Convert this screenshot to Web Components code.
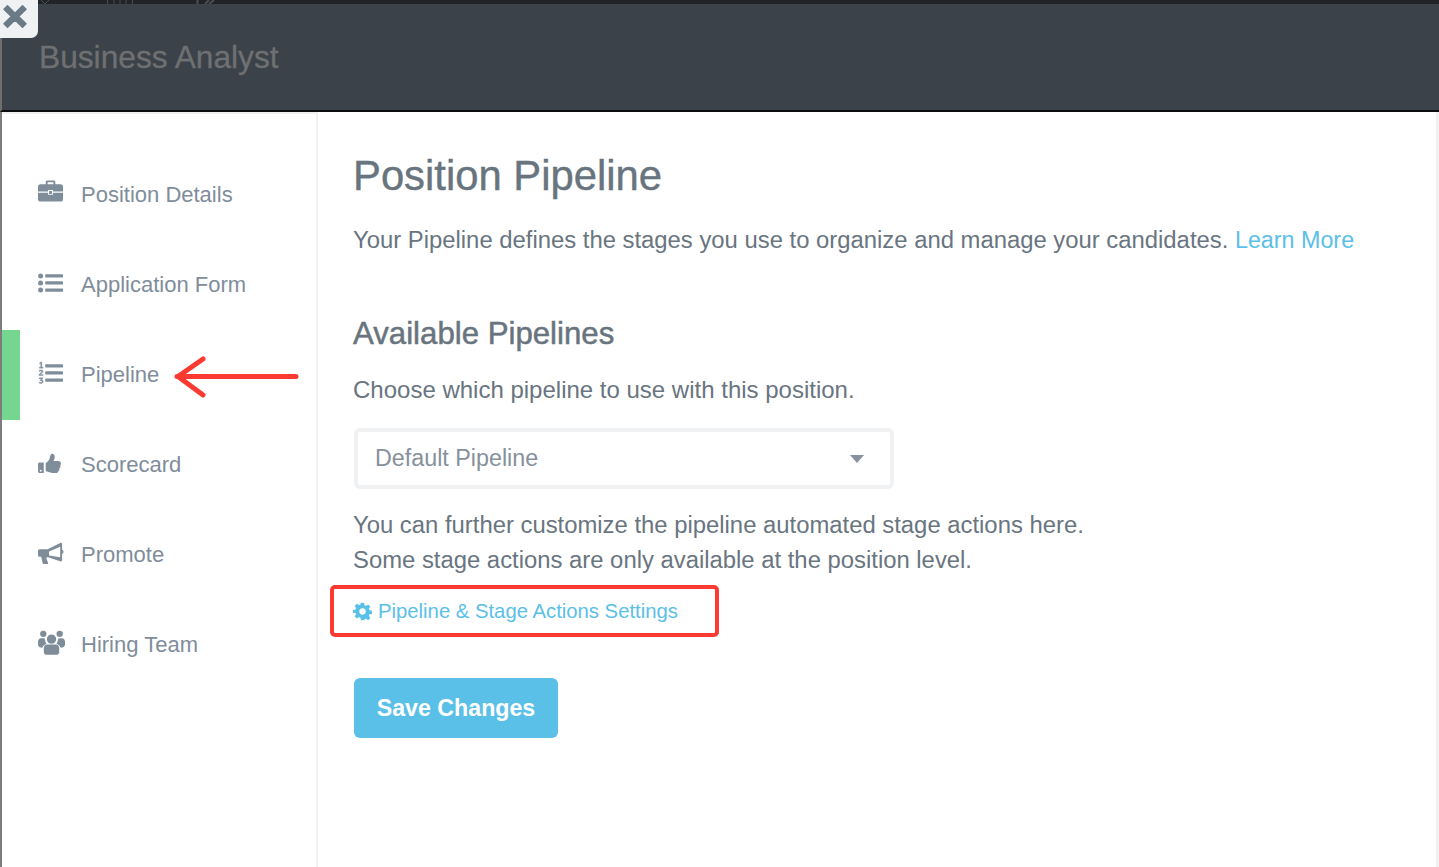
<!DOCTYPE html>
<html><head><meta charset="utf-8"><style>
html,body{margin:0;padding:0;height:100%;overflow:hidden;background:#fff}
body{font-family:"Liberation Sans",Arial,sans-serif}
</style></head><body>
<template id="t-app"><style>
:host{display:grid;grid-template-rows:112px 1fr;width:1439px;height:867px;position:relative;overflow:hidden;background:#fff}
.body{display:grid;grid-template-columns:318px 1fr;border-left:2px solid #7d7d7d;border-right:3px solid #eff1f3;min-height:0}
.x{position:absolute;left:0;top:0;width:38px;height:38px;background:#eff1f3;border-radius:0 0 7px 0;display:flex;align-items:center;justify-content:center}
.x svg{display:block;margin:-6px 0 0 -8px}
.frag{position:absolute;left:0;top:0}
</style>
<slot name="header"></slot>
<div class="body"><slot name="side"></slot><slot name="main"></slot></div>
<svg class="frag" width="240" height="4" viewBox="0 0 240 4"><g fill="none" stroke="#4a4e52" stroke-width="1"><path d="M41 0 45 4 49 0"/><path d="M107.500 0V4M114 0V4M120 0V4M126 0V4M132.500 0V4"/><path d="M197.500 0V4M205 4 209 0M209 4 214 0" stroke-width="2"/></g></svg>
<div class="x"><svg width="26" height="26" viewBox="0 0 26 26"><path d="M5.5 2.8 13 10.2 20.5 2.8 24 6.300 16.600 13.500 24 20.800 20.500 24.300 13 16.900 5.500 24.300 2 20.800 9.400 13.500 2 6.300Z" fill="#6a7a87" stroke="#6a7a87" stroke-width="1.500" stroke-linejoin="round"/></svg></div>
<slot></slot>
</template>

<template id="t-header"><style>
:host{display:flex;flex-direction:column;height:112px;background:#3b4249;box-sizing:border-box;border-top:4px solid #212427;border-bottom:2px solid #0c0d0e;border-left:2px solid #6e6e6e}
.t{font-size:31.700px;line-height:34px;color:#6f7072;padding:36px 0 0 37px;-webkit-text-stroke:.3px #6f7072}
</style><div class="t"><slot></slot></div></template>

<template id="t-side"><style>
:host{display:flex;flex-direction:column;box-sizing:border-box;border-right:2px solid #eff1f3;border-top:2px solid #eff1f3;padding-top:36px;width:316px}
</style><slot></slot></template>

<template id="t-item"><style>
:host{display:flex;align-items:center;height:90px;box-sizing:border-box;padding-left:36px;gap:15px;color:#7f8d9b;font-size:22px;position:relative}
:host([active])::before{content:"";position:absolute;left:0;top:0;bottom:0;width:18px;background:#75d68f}
.i{width:28px;height:28px;display:flex;align-items:center;justify-content:flex-start;flex:none;margin-top:-4px}
.l{margin-top:-1px}
</style><span class="i"><slot name="icon"></slot></span><span class="l"><slot></slot></span></template>

<template id="t-main"><style>
:host{display:block;padding:36px 0 0 33px;color:#69757f;font-size:23.850px;position:relative}
h1{font:400 41.800px/56px "Liberation Sans",Arial,sans-serif;color:#68747e;margin:0;-webkit-text-stroke:.4px #68747e}
h2{font:400 31.200px/36px "Liberation Sans",Arial,sans-serif;color:#68747e;margin:58px 0 0;-webkit-text-stroke:.5px #68747e}
p{margin:0;line-height:35px;white-space:nowrap}
.intro{margin-top:18px}
.choose{margin-top:20px;font-size:24px}
a{color:#5bc0e7;text-decoration:none}
.intro a{font-size:23.300px}
.custom{margin-top:18px}
.link{display:flex;align-items:center;gap:6px;font-size:20.300px;margin-top:18px;height:32px}
.save{margin:51px 0 0 1px;width:204px;height:60px;background:#5bc0e7;color:#fff;border-radius:6px;font-size:23.200px;font-weight:700;display:flex;align-items:center;justify-content:center}
.callout{position:absolute;left:10px;top:473px;width:389px;height:52px;box-sizing:border-box;border:4px solid #fb3b32;border-radius:5px}
</style>
<h1><slot name="title"></slot></h1>
<p class="intro"><slot name="intro"></slot> <a href="#">Learn More</a></p>
<h2><slot name="sub"></slot></h2>
<p class="choose"><slot name="choose"></slot></p>
<slot name="select"></slot>
<div class="custom"><p><slot name="l1"></slot></p><p><slot name="l2"></slot></p></div>
<a class="link" href="#"><svg width="19" height="19" viewBox="0 0 24 24"><path fill="#5bc0e7" fill-rule="evenodd" d="M10 1h4l.6 3.100 1.800.8 2.700-1.800 2.800 2.800-1.800 2.700.8 1.800 3.100.6v4l-3.100.6-.8 1.800 1.800 2.700-2.800 2.800-2.700-1.800-1.800.8L14 23h-4l-.6-3.100-1.800-.8-2.700 1.800-2.800-2.800 1.800-2.700-.8-1.800L0 14v-4l3.100-.6.8-1.800-1.800-2.700 2.800-2.800 2.700 1.800 1.800-.8ZM12 8a4 4 0 1 0 0 8 4 4 0 0 0 0-8Z"/></svg><span><slot name="link"></slot></span></a>
<div class="save"><slot name="save"></slot></div>
<div class="callout"></div>
</template>

<template id="t-select"><style>
:host{display:flex;align-items:center;justify-content:space-between;box-sizing:border-box;width:540px;height:61px;margin:21px 0 1px 1px;border:4px solid #eff1f3;border-radius:6px;padding:0 26px 0 17px;color:#86919d;font-size:23.300px}
i{display:block;width:0;height:0;border-left:7px solid transparent;border-right:7px solid transparent;border-top:8px solid #87929e}
</style><span><slot></slot></span><i></i></template>

<template id="t-arrow"><style>
:host{position:absolute;left:173px;top:355px;width:128px;height:44px;display:block}
svg{display:block}
</style><svg width="128" height="44" viewBox="0 0 128 44"><path d="M4 21.500H123M30 4 5 21.500 30 40" fill="none" stroke="#fb3b32" stroke-width="5" stroke-linecap="round" stroke-linejoin="round"/></svg></template>

<x-app>
<x-header slot="header">Business Analyst</x-header>
<x-side slot="side">
 <x-item><svg slot="icon" style="transform:translateY(-2px)" width="25" height="22" viewBox="0 0 26 22"><path fill="#7f8d9b" d="M8 4V1.500C8 .7 8.700 0 9.500 0h7c.8 0 1.500.7 1.500 1.500V4h5.500C25 4 26 5 26 6.500V11.500H15.500V10h-5v1.500H0V6.500C0 5 1 4 2.500 4ZM10 4h6V2h-6ZM11.500 11h3V14h-3ZM0 12.700h10.500V15h5v-2.300H26v6.800c0 1.400-1 2.500-2.500 2.500h-21C1 22 0 20.900 0 19.500Z"/></svg>Position Details</x-item>
 <x-item><svg slot="icon" width="25" height="20" viewBox="0 0 26 20"><g fill="#7f8d9b"><circle cx="2.700" cy="2.700" r="2.600"/><circle cx="2.700" cy="10" r="2.600"/><circle cx="2.700" cy="17.300" r="2.600"/><rect x="7.500" y="1" width="18.500" height="3.300" rx=".5"/><rect x="7.500" y="8.300" width="18.500" height="3.300" rx=".5"/><rect x="7.500" y="15.700" width="18.500" height="3.300" rx=".5"/></g></svg>Application Form</x-item>
 <x-item active><svg slot="icon" width="25" height="24" viewBox="0 0 26 24"><g fill="#7f8d9b"><rect x="7.500" y="3" width="18.500" height="3.300" rx=".5"/><rect x="7.500" y="10.300" width="18.500" height="3.300" rx=".5"/><rect x="7.500" y="17.700" width="18.500" height="3.300" rx=".5"/><path stroke="#7f8d9b" stroke-width=".4" d="M1.500 1.500 3 .5h1V6h1.300v1H1.300V6h1.500V1.800l-1 .6ZM1 9.500c1-1 4-1.200 4.200.8.100 1.300-1.600 2-2.700 3.300h2.800v1H1v-1c1.500-1.600 3-2.400 2.900-3.200-.1-.8-1.500-.7-2.500 0ZM1.200 17h3.900v.9L3.600 19.300c1.200 0 1.900.7 1.800 1.800-.1 2-3 2.300-4.300 1.200l.4-.9c1 .7 2.700.6 2.700-.4 0-.8-.9-1-2-.9v-.8l1.500-1.400H1.200Z"/></g></svg>Pipeline</x-item>
 <x-item><svg slot="icon" width="23" height="21" viewBox="0 0 24 22"><path fill="#7f8d9b" fill-rule="evenodd" d="M0 11.500C0 10.700.6 10 1.500 10H6v11H1.500C.6 21 0 20.300 0 19.500ZM2.800 17.500a1 1 0 1 0 0 2 1 1 0 0 0 0-2ZM8 10.500c2-1 3.500-3 4.200-5 .4-1.300.2-3.500 1.800-4.500 2-.8 3.700 1 3.500 3.500-.1 1.600-.9 3-1.300 4h5c1.500 0 2.800 1.200 2.800 2.600 0 .8-.3 1.400-.7 1.900.3 1.300 0 2.300-.9 3 .2 1.200-.2 2.200-1.100 2.800 0 1.500-1.200 2.200-2.800 2.200h-2.500c-2 0-4-.6-5.500-1.300-.7-.3-1.500-.5-2.500-.5Z"/></svg>Scorecard</x-item>
 <x-item><svg slot="icon" width="26" height="23" viewBox="0 0 27 23"><path fill="#7f8d9b" fill-rule="evenodd" d="M1.500 7H10L23 .5c1-.5 2 0 2 1V7.500c1 .5 1.500 1 1.500 2.200s-.5 1.800-1.500 2.300V18.500c0 1-1 1.500-2 1L10.500 15.500H9c-.5 1.500 0 2.500 1.500 5.500.3.8-.2 1.500-1 1.500H6.500c-1 0-1.500-.5-1.800-1.500L3.300 15H1.500C.5 15 0 14 0 13V9C0 8 .5 7 1.500 7ZM11.500 9.500 23 4.500V15.500L11.500 13.500Z"/></svg>Promote</x-item>
 <x-item><svg slot="icon" width="27" height="26" viewBox="0 0 28 26"><g fill="#7f8d9b"><circle cx="5.500" cy="3.500" r="3.300"/><circle cx="22.500" cy="3.500" r="3.300"/><circle cx="14" cy="9" r="4.800"/><path d="M0 11.500C0 9.500 1.500 8 3 8h3.500c.5.700.8 1.500 1 2.300.2 1.400.7 2.700 1.500 3.400C6.500 14.500 5 16 4.500 18 2 18 0 16.500 0 14.500ZM28 11.500C28 9.500 26.500 8 25 8h-3.500c-.5.700-.8 1.500-1 2.300-.2 1.400-.7 2.700-1.500 3.400 2.500.8 4 2.300 4.500 4.300 2.500 0 4.500-1.500 4.500-3.500ZM9.500 14.500h9c2 0 3.500 1.700 3.500 3.800v4c0 1.700-1.300 3-3 3H9c-1.700 0-3-1.300-3-3v-4c0-2.100 1.500-3.800 3.500-3.800Z"/></g></svg>Hiring Team</x-item>
</x-side>
<x-main slot="main">
 <span slot="title">Position Pipeline</span>
 <span slot="intro">Your Pipeline defines the stages you use to organize and manage your candidates.</span>
 <span slot="sub">Available Pipelines</span>
 <span slot="choose">Choose which pipeline to use with this position.</span>
 <x-select slot="select">Default Pipeline</x-select>
 <span slot="l1">You can further customize the pipeline automated stage actions here.</span>
 <span slot="l2">Some stage actions are only available at the position level.</span>
 <span slot="link">Pipeline &amp; Stage Actions Settings</span>
 <span slot="save">Save Changes</span>
</x-main>
<x-arrow></x-arrow>
</x-app>
<script>
const reg=(n,t)=>customElements.define(n,class extends HTMLElement{constructor(){super();this.attachShadow({mode:"open"}).appendChild(document.getElementById(t).content.cloneNode(true));}});
reg("x-app","t-app");reg("x-header","t-header");reg("x-side","t-side");reg("x-item","t-item");reg("x-main","t-main");reg("x-select","t-select");reg("x-arrow","t-arrow");
</script>
</body></html>
